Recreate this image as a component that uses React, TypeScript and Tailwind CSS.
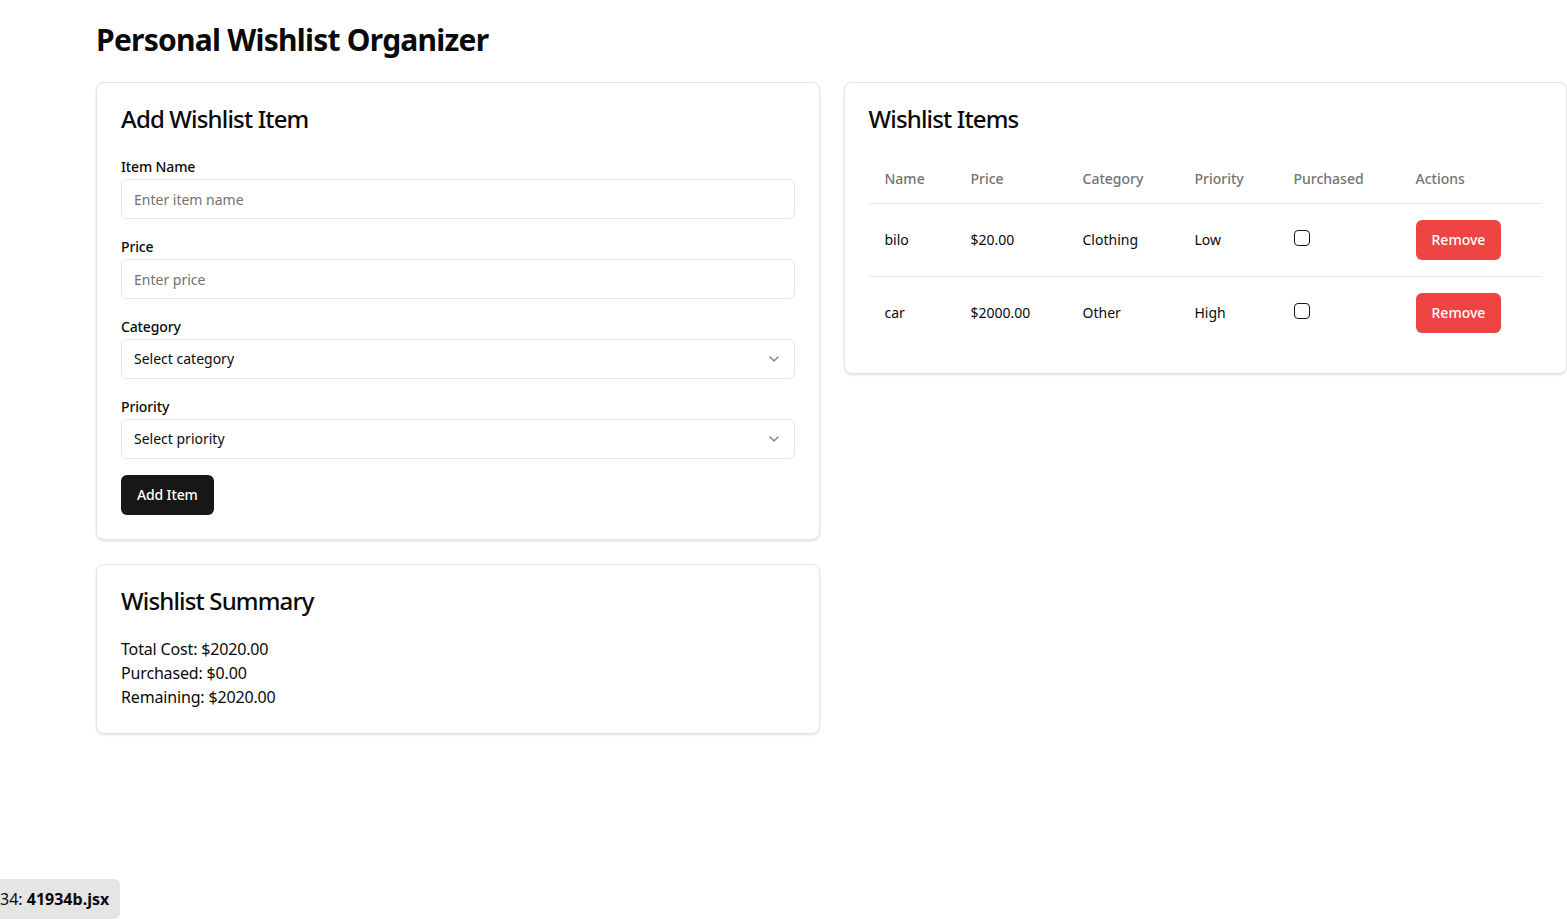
import React, { useState } from 'react';
import { ChevronDown } from 'lucide-react';

interface WishItem {
  id: number;
  name: string;
  price: number;
  category: string;
  priority: string;
  purchased: boolean;
}

const initialItems: WishItem[] = [
  { id: 1, name: 'bilo', price: 20, category: 'Clothing', priority: 'Low', purchased: false },
  { id: 2, name: 'car', price: 2000, category: 'Other', priority: 'High', purchased: false },
];

const Field: React.FC<{ label: string; children: React.ReactNode }> = ({ label, children }) => (
  <div className="flex flex-col">
    <label className="text-sm font-medium leading-6 tracking-[-0.01em] text-[#0a0a0a]">{label}</label>
    {children}
  </div>
);

const FakeSelect: React.FC<{ placeholder: string }> = ({ placeholder }) => (
  <button
    type="button"
    className="flex h-10 w-full items-center justify-between rounded-md border border-[#e5e5e5] bg-white px-3 text-sm text-[#0a0a0a]"
  >
    <span>{placeholder}</span>
    <ChevronDown className="h-4 w-4 opacity-50" />
  </button>
);

const App: React.FC = () => {
  const [items, setItems] = useState<WishItem[]>(initialItems);

  const total = items.reduce((s, i) => s + i.price, 0);
  const purchased = items.filter((i) => i.purchased).reduce((s, i) => s + i.price, 0);

  const togglePurchased = (id: number) =>
    setItems((prev) => prev.map((i) => (i.id === id ? { ...i, purchased: !i.purchased } : i)));

  const remove = (id: number) => setItems((prev) => prev.filter((i) => i.id !== id));

  return (
    <div className="min-h-screen bg-white pl-[96px] pt-[22px] font-['Noto_Sans',sans-serif] text-[#0a0a0a]">
      <h1 className="mb-6 text-3xl font-bold leading-9 tracking-[-0.025em]">Personal Wishlist Organizer</h1>

      <div className="grid grid-cols-2 items-start gap-6">
        {/* Left column */}
        <div className="flex flex-col gap-6">
          <div className="rounded-lg border border-[#e5e5e5] bg-white shadow-sm">
            <div className="p-6">
              <h2 className="text-2xl font-medium leading-6 tracking-[-0.035em]">Add Wishlist Item</h2>
            </div>
            <div className="flex flex-col gap-4 px-6 pb-6">
              <Field label="Item Name">
                <input
                  className="h-10 w-full rounded-md border border-[#e5e5e5] px-3 text-sm placeholder:text-[#737373] outline-none"
                  placeholder="Enter item name"
                />
              </Field>
              <Field label="Price">
                <input
                  className="h-10 w-full rounded-md border border-[#e5e5e5] px-3 text-sm placeholder:text-[#737373] outline-none"
                  placeholder="Enter price"
                />
              </Field>
              <Field label="Category">
                <FakeSelect placeholder="Select category" />
              </Field>
              <Field label="Priority">
                <FakeSelect placeholder="Select priority" />
              </Field>
              <div>
                <button className="h-10 rounded-md bg-[#171717] px-4 text-sm font-medium tracking-[-0.01em] text-white">
                  Add Item
                </button>
              </div>
            </div>
          </div>

          <div className="rounded-lg border border-[#e5e5e5] bg-white shadow-sm">
            <div className="p-6">
              <h2 className="text-2xl font-medium leading-6 tracking-[-0.035em]">Wishlist Summary</h2>
            </div>
            <div className="px-6 pb-6 text-base leading-6 tracking-[-0.01em]">
              <p>Total Cost: ${total.toFixed(2)}</p>
              <p>Purchased: ${purchased.toFixed(2)}</p>
              <p>Remaining: ${(total - purchased).toFixed(2)}</p>
            </div>
          </div>
        </div>

        {/* Right column */}
        <div className="rounded-lg border border-[#e5e5e5] bg-white shadow-sm">
          <div className="p-6">
            <h2 className="text-2xl font-medium leading-6 tracking-[-0.035em]">Wishlist Items</h2>
          </div>
          <div className="px-6 pb-6">
            <table className="w-full table-fixed text-sm">
              <thead>
                <tr className="border-b border-[#e5e5e5]">
                  <th className="h-12 w-[86px] px-4 text-left font-medium text-[#737373]">Name</th>
                  <th className="h-12 w-[112px] px-4 text-left font-medium text-[#737373]">Price</th>
                  <th className="h-12 w-[112px] px-4 text-left font-medium text-[#737373]">Category</th>
                  <th className="h-12 w-[99px] px-4 text-left font-medium text-[#737373]">Priority</th>
                  <th className="h-12 w-[122px] px-4 text-left font-medium text-[#737373]">Purchased</th>
                  <th className="h-12 px-4 text-left font-medium text-[#737373]">Actions</th>
                </tr>
              </thead>
              <tbody>
                {items.map((item, idx) => (
                  <tr
                    key={item.id}
                    className={idx < items.length - 1 ? 'border-b border-[#e5e5e5]' : ''}
                  >
                    <td className="p-4 align-middle">{item.name}</td>
                    <td className="p-4 align-middle">${item.price.toFixed(2)}</td>
                    <td className="p-4 align-middle">{item.category}</td>
                    <td className="p-4 align-middle">{item.priority}</td>
                    <td className="p-4 align-middle">
                      <button
                        type="button"
                        onClick={() => togglePurchased(item.id)}
                        className={
                          'block h-4 w-4 -translate-y-[2px] rounded-sm border border-[#171717] ' +
                          (item.purchased ? 'bg-[#171717]' : 'bg-white')
                        }
                      />
                    </td>
                    <td className="p-4 align-middle">
                      <button
                        onClick={() => remove(item.id)}
                        className="h-10 rounded-md bg-[#ef4444] px-4 text-sm font-medium text-white"
                      >
                        Remove
                      </button>
                    </td>
                  </tr>
                ))}
              </tbody>
            </table>
          </div>
        </div>
      </div>

      {/* file badge */}
      <div className="fixed bottom-[4px] left-0 flex h-10 w-[120px] items-center rounded-r-md bg-[#e5e5e5] text-base text-[#0a0a0a]">
        <span className="whitespace-nowrap">
          34: <span className="font-bold">41934b.jsx</span>
        </span>
      </div>
    </div>
  );
};

export default App;
